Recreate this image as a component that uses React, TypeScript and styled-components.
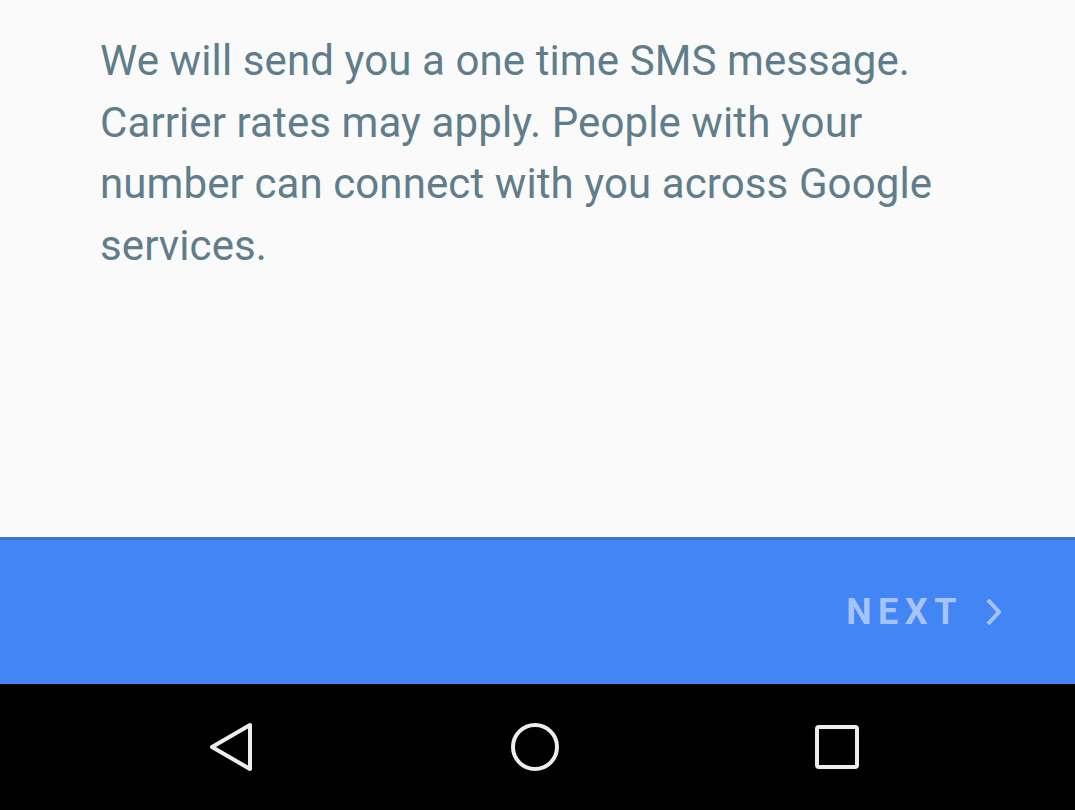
import React from 'react';
import styled, { createGlobalStyle } from 'styled-components';

const GlobalStyle = createGlobalStyle`
  html, body {
    margin: 0;
    padding: 0;
    background: #fafafa;
  }
  body {
    font-family: Roboto, "Noto Sans", sans-serif;
  }
`;

const Screen = styled.div`
  width: 1075px;
  height: 810px;
  display: flex;
  flex-direction: column;
  overflow: hidden;
`;

const Content = styled.div`
  height: 537px;
  box-sizing: border-box;
  background: #fafafa;
  padding: 30px 124px 0 100px;
`;

const Message = styled.p`
  margin: 0;
  font-size: 42px;
  line-height: 61.5px;
  color: #607d8b;
  letter-spacing: 0.1px;
`;

const ActionBar = styled.div`
  height: 147px;
  box-sizing: border-box;
  background: #4285f4;
  border-top: 3px solid #3d73cf;
  display: flex;
  align-items: center;
  justify-content: flex-end;
  padding: 0 72px 0 0;
`;

const NextButton = styled.button`
  display: flex;
  align-items: center;
  gap: 22px;
  background: none;
  border: none;
  padding: 0;
  color: #a6c4fa;
  font-family: Roboto, "Noto Sans", sans-serif;
  font-weight: 700;
  font-size: 36px;
  letter-spacing: 6.5px;
  cursor: pointer;
`;

const NavBar = styled.div`
  flex: 1;
  background: #000;
  display: flex;
  align-items: center;
  justify-content: space-between;
  padding: 0 212px 0 206px;
`;

const NavIcon = styled.svg`
  display: block;
  width: 52px;
  height: 52px;
`;

export default function App() {
  return (
    <Screen>
      <GlobalStyle />
      <Content>
        <Message>
          We will send you a one time SMS message. Carrier rates may apply. People with your
          number can connect with you across Google services.
        </Message>
      </Content>
      <ActionBar>
        <NextButton>
          NEXT
          <svg width="18" height="30" viewBox="0 0 18 30" fill="none">
            <path d="M3 3 L14 15 L3 27" stroke="#a6c4fa" strokeWidth="4" strokeLinecap="butt" />
          </svg>
        </NextButton>
      </ActionBar>
      <NavBar>
        <NavIcon viewBox="0 0 52 52" fill="none">
          <path d="M44 4 L44 48 L6 26 Z" stroke="#eee" strokeWidth="4" strokeLinejoin="round" />
        </NavIcon>
        <NavIcon viewBox="0 0 52 52" fill="none">
          <circle cx="26" cy="26" r="22" stroke="#eee" strokeWidth="4" />
        </NavIcon>
        <NavIcon viewBox="0 0 52 52" fill="none">
          <rect x="6" y="6" width="40" height="40" rx="2" stroke="#eee" strokeWidth="4" />
        </NavIcon>
      </NavBar>
    </Screen>
  );
}
